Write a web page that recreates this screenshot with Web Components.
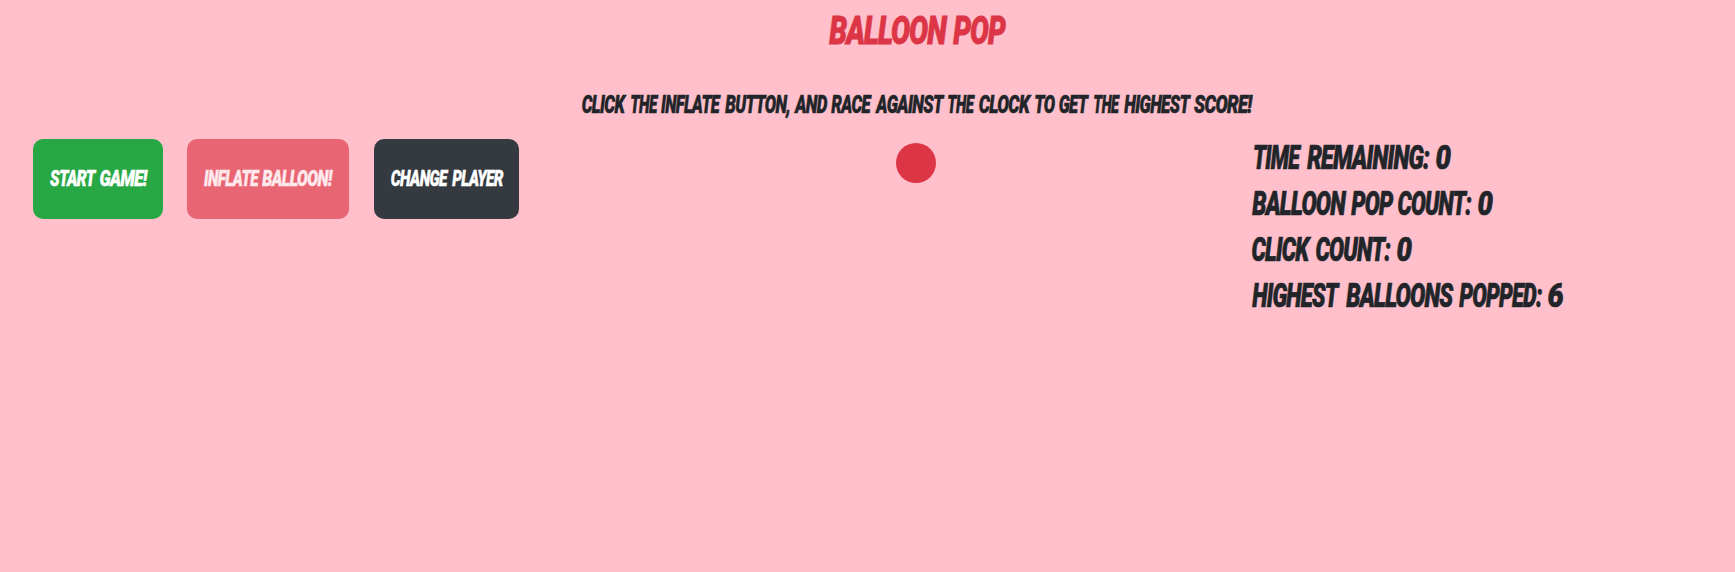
<!DOCTYPE html>
<html lang="en">
<head>
<meta charset="utf-8">
<title>Balloon Pop</title>
<style>
body { margin: 0; background: #ffc0cb; color: #212529; }
</style>
</head>
<body>
<balloon-game></balloon-game>
<script>
// One line of comic lettering. "fit" lists word widths and the gaps between them.
class ComicText extends HTMLElement {
  constructor() {
    super();
    this.attachShadow({ mode: 'open' }).innerHTML = `<style>
      :host { display: flex; justify-content: flex-start; white-space: pre; letter-spacing: -.035em;
        -webkit-text-stroke: .022em currentColor;
        font-family: Roboto, "Liberation Sans", sans-serif; font-weight: 900; font-style: italic; }
      span { display: block; flex: none; }
      i { display: block; width: max-content; transform-origin: 0 50%; }
    </style>`;
  }
  connectedCallback() {
    const fit = this.getAttribute('fit').split(' ').map(Number);
    const size = parseFloat(this.getAttribute('size'));
    this.style.fontSize = size + 'px';
    const pen = document.createElement('canvas').getContext('2d');
    pen.font = `italic 900 ${size * 4}px Roboto, "Liberation Sans", sans-serif`;
    pen.letterSpacing = -size * 4 * .035 + 'px';
    const words = this.getAttribute('text').split(' ');
    words.forEach((word, n) => {
      const m = pen.measureText(word);
      const left = m.actualBoundingBoxLeft / 4 + size * .011;
      const ink = left + m.actualBoundingBoxRight / 4 + size * .011;
      const k = fit[n * 2] / ink;
      const box = document.createElement('span');
      const type = document.createElement('i');
      box.style.width = fit[n * 2] + (fit[n * 2 + 1] || 0) + 'px';
      type.style.transform = `translateX(${left * k}px) scaleX(${k})`;
      type.textContent = word + (n < words.length - 1 ? ' ' : '');
      box.append(type);
      this.shadowRoot.append(box);
    });
  }
}
customElements.define('comic-text', ComicText);

class GameButton extends HTMLElement {
  constructor() {
    super();
    this.attachShadow({ mode: 'open' }).innerHTML = `<style>
      :host { display: block; }
      button { display: flex; align-items: center; box-sizing: border-box; width: 100%; height: 80px;
        padding: 0 0 0 17px; border: 0; border-radius: 10px; color: #fff; background: var(--fill); line-height: 30px; }
      button:disabled { opacity: .65; }
    </style><button><slot></slot></button>`;
    this.shadowRoot.querySelector('button').disabled = this.hasAttribute('disabled');
  }
}
customElements.define('game-button', GameButton);

class GameStats extends HTMLElement {
  constructor() {
    super();
    this.attachShadow({ mode: 'open' }).innerHTML = `<style>
      :host { display: grid; grid-auto-rows: 46px; line-height: 46px; }
      .first { padding-left: 2px; }
    </style>
    <comic-text class="first" size="32.5" text="TIME REMAINING: 0" fit="47.5 5.5 122.5 6.5 15"></comic-text>
    <comic-text size="32.5" text="BALLOON POP COUNT: 0" fit="94.5 4 42.5 5 73.5 6.5 15"></comic-text>
    <comic-text size="32.5" text="CLICK COUNT: 0" fit="59.5 4.5 74.5 6.5 15"></comic-text>
    <comic-text size="32.5" text="HIGHEST BALLOONS POPPED: 6" fit="88 5.5 107.5 5.5 83 6.5 15"></comic-text>`;
  }
}
customElements.define('game-stats', GameStats);

class BalloonGame extends HTMLElement {
  constructor() {
    super();
    this.attachShadow({ mode: 'open' }).innerHTML = `<style>
      :host { display: block; height: 572px; box-sizing: border-box; padding-top: 7px; }
      header { display: grid; justify-content: center; justify-items: center; padding-left: 100px; }
      .title { line-height: 48px; color: #dc3545; }
      .hint { line-height: 30px; margin-top: 35px; }
      main { display: grid; grid-template-columns: 863px 356px 1fr; margin-top: 19px; padding-left: 33px; }
      nav { display: flex; align-items: flex-start; }
      .start { --fill: #28a745; width: 130px; margin-right: 24px; }
      .inflate { --fill: #dc3545; width: 162px; margin-right: 25px; }
      .player { --fill: #343a40; width: 145px; }
      .balloon { width: 40px; height: 40px; margin-top: 4px; border-radius: 50%; background: #dc3545; }
      game-stats { margin-top: -4px; }
    </style>
    <header>
      <comic-text class="title" size="39.5" text="BALLOON POP" fit="118.5 5 53"></comic-text>
      <comic-text class="hint" size="25" text="CLICK THE INFLATE BUTTON, AND RACE AGAINST THE CLOCK TO GET THE HIGHEST SCORE!"
        fit="44.5 4 27.5 3 60 3.5 64.5 4.5 33.5 4 41 3 69.5 3.5 27 4 52.5 3.5 20 4 30 5 26 3.5 67 3 59"></comic-text>
    </header>
    <main>
      <nav>
        <game-button class="start"><comic-text size="22" text="START GAME!" fit="46.5 3 48"></comic-text></game-button>
        <game-button class="inflate" disabled><comic-text size="22" text="INFLATE BALLOON!" fit="55.5 2.5 71"></comic-text></game-button>
        <game-button class="player"><comic-text size="22" text="CHANGE PLAYER" fit="57.5 3 51.5"></comic-text></game-button>
      </nav>
      <div class="balloon"></div>
      <game-stats></game-stats>
    </main>`;
  }
}
customElements.define('balloon-game', BalloonGame);
</script>
</body>
</html>
